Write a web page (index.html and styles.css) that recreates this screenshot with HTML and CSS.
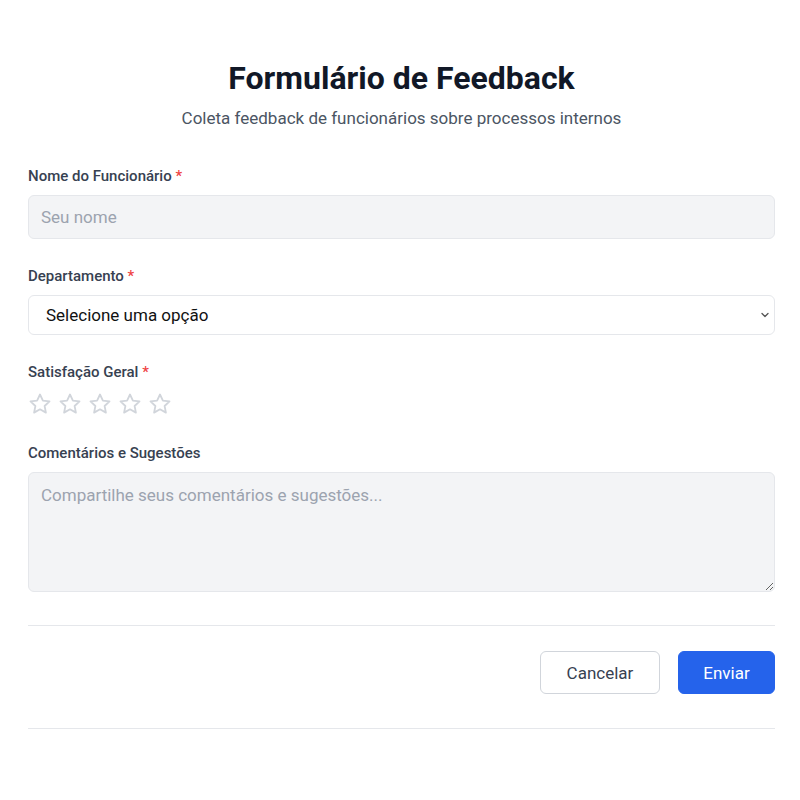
FILE: index.html
```html
<!DOCTYPE html>
<html lang="pt">
<head>
<meta charset="utf-8">
<link rel="stylesheet" href="styles.css">
</head>
<body>
<div class="page">
  <header class="head">
    <h1 class="title">Formulário de Feedback</h1>
    <p class="subtitle">Coleta feedback de funcionários sobre processos internos</p>
  </header>
  <form class="form">
    <div class="field">
      <label class="label">Nome do Funcionário <span class="req">*</span></label>
      <input class="input" type="text" placeholder="Seu nome">
    </div>
    <div class="field">
      <label class="label">Departamento <span class="req">*</span></label>
      <div class="select">
        <span>Selecione uma opção</span>
        <svg class="chev" width="10" height="10" viewBox="0 0 10 10"><path d="M2 3.5 L5 6.5 L8 3.5" fill="none" stroke="#555" stroke-width="1.3" stroke-linecap="round" stroke-linejoin="round"/></svg>
      </div>
    </div>
    <div class="field">
      <label class="label">Satisfação Geral <span class="req">*</span></label>
      <div class="stars">
        <svg class="star" viewBox="0 0 24 24"><path d="M12 2.5l2.9 6.1 6.6.8-4.9 4.6 1.3 6.6L12 17.3l-5.9 3.3 1.3-6.6-4.9-4.6 6.6-.8z"/></svg>
        <svg class="star" viewBox="0 0 24 24"><path d="M12 2.5l2.9 6.1 6.6.8-4.9 4.6 1.3 6.6L12 17.3l-5.9 3.3 1.3-6.6-4.9-4.6 6.6-.8z"/></svg>
        <svg class="star" viewBox="0 0 24 24"><path d="M12 2.5l2.9 6.1 6.6.8-4.9 4.6 1.3 6.6L12 17.3l-5.9 3.3 1.3-6.6-4.9-4.6 6.6-.8z"/></svg>
        <svg class="star" viewBox="0 0 24 24"><path d="M12 2.5l2.9 6.1 6.6.8-4.9 4.6 1.3 6.6L12 17.3l-5.9 3.3 1.3-6.6-4.9-4.6 6.6-.8z"/></svg>
        <svg class="star" viewBox="0 0 24 24"><path d="M12 2.5l2.9 6.1 6.6.8-4.9 4.6 1.3 6.6L12 17.3l-5.9 3.3 1.3-6.6-4.9-4.6 6.6-.8z"/></svg>
      </div>
    </div>
    <div class="field">
      <label class="label">Comentários e Sugestões</label>
      <textarea class="textarea" placeholder="Compartilhe seus comentários e sugestões..."></textarea>
    </div>
    <div class="actions">
      <button type="button" class="btn btn-cancel">Cancelar</button>
      <button type="button" class="btn btn-primary">Enviar</button>
    </div>
  </form>
</div>
</body>
</html>
```

FILE: styles.css
```css
* { box-sizing: border-box; }
body {
  margin: 0;
  background: #fff;
  font-family: Roboto, "Noto Sans", sans-serif;
  color: #111827;
}
.page {
  padding: 58px 25px 0 28px;
}
.head {
  text-align: center;
  margin-bottom: 35px;
}
.title {
  margin: 0;
  font-size: 32px;
  line-height: 40px;
  font-weight: 700;
  color: #111827;
}
.subtitle {
  margin: 8px 0 0;
  font-size: 17px;
  line-height: 24px;
  color: #4b5563;
}
.form {
  display: flex;
  flex-direction: column;
}
.field {
  display: flex;
  flex-direction: column;
  margin-bottom: 26px;
}
.label {
  font-size: 15px;
  line-height: 22px;
  font-weight: 500;
  color: #374151;
  margin-bottom: 8px;
}
.req { color: #ef4444; }
.input {
  height: 44px;
  border: 1px solid #e5e7eb;
  border-radius: 6px;
  background: #f3f4f6;
  padding: 0 12px;
  font: inherit;
  font-size: 17px;
  color: #111827;
  outline: none;
}
.input::placeholder, .textarea::placeholder { color: #9ca3af; }
.select {
  height: 40px;
  border: 1px solid #e5e7eb;
  border-radius: 6px;
  background: #fff;
  padding: 0 4px 0 17px;
  display: flex;
  align-items: center;
  justify-content: space-between;
  font-size: 17px;
  color: #111;
}
.stars {
  display: flex;
  gap: 6px;
  padding-top: 1px;
}
.star {
  width: 24px;
  height: 24px;
  fill: none;
  stroke: #d1d5db;
  stroke-width: 1.8;
  stroke-linejoin: round;
}
.textarea {
  height: 120px;
  border: 1px solid #e5e7eb;
  border-radius: 6px;
  background: #f3f4f6;
  padding: 10px 12px;
  font: inherit;
  font-size: 17px;
  line-height: 24px;
  resize: vertical;
  outline: none;
}
.actions {
  margin-top: 7px;
  border-top: 1px solid #e5e7eb;
  border-bottom: 1px solid #e5e7eb;
  padding: 25px 0 34px;
  display: flex;
  justify-content: flex-end;
  gap: 18px;
}
.btn {
  height: 43px;
  border-radius: 6px;
  font-family: inherit;
  font-size: 17px;
  padding: 0;
  cursor: pointer;
}
.btn-cancel {
  background: #fff;
  border: 1px solid #d1d5db;
  color: #374151;
  width: 120px;
}
.btn-primary {
  background: #2563eb;
  border: 1px solid #2563eb;
  color: #fff;
  width: 97px;
}
```
